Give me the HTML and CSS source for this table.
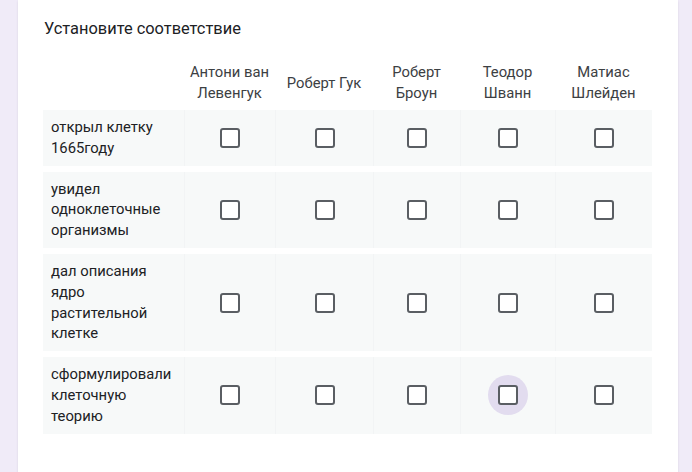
FILE: index.html
```html
<!DOCTYPE html>
<html lang="ru">
<head>
<meta charset="utf-8">
<link rel="stylesheet" href="styles.css">
</head>
<body>
<div class="card">
  <div class="title">Установите соответствие</div>
  <div class="table">
    <div class="row head">
      <div class="label"></div>
      <div class="cell">Антони ван Левенгук</div>
      <div class="cell">Роберт Гук</div>
      <div class="cell">Роберт Броун</div>
      <div class="cell">Теодор Шванн</div>
      <div class="cell">Матиас Шлейден</div>
    </div>
    <div class="row body">
      <div class="label">открыл клетку 1665году</div>
      <div class="cell"><span class="box"></span></div>
      <div class="cell"><span class="box"></span></div>
      <div class="cell"><span class="box"></span></div>
      <div class="cell"><span class="box"></span></div>
      <div class="cell"><span class="box"></span></div>
    </div>
    <div class="row body">
      <div class="label">увидел одноклеточные организмы</div>
      <div class="cell"><span class="box"></span></div>
      <div class="cell"><span class="box"></span></div>
      <div class="cell"><span class="box"></span></div>
      <div class="cell"><span class="box"></span></div>
      <div class="cell"><span class="box"></span></div>
    </div>
    <div class="row body">
      <div class="label">дал описания ядро растительной клетке</div>
      <div class="cell"><span class="box"></span></div>
      <div class="cell"><span class="box"></span></div>
      <div class="cell"><span class="box"></span></div>
      <div class="cell"><span class="box"></span></div>
      <div class="cell"><span class="box"></span></div>
    </div>
    <div class="row body">
      <div class="label">сформулировали клеточную теорию</div>
      <div class="cell"><span class="box"></span></div>
      <div class="cell"><span class="box"></span></div>
      <div class="cell"><span class="box"></span></div>
      <div class="cell"><span class="focus"><span class="box"></span></span></div>
      <div class="cell"><span class="box"></span></div>
    </div>
  </div>
</div>
</body>
</html>
```
FILE: styles.css
```css
html, body {
  margin: 0;
  padding: 0;
  background: #f0ebf8;
  font-family: Roboto, "Noto Sans", sans-serif;
  color: #202124;
}
.card {
  margin-left: 18px;
  width: 660px;
  height: 480px;
  box-sizing: border-box;
  background: #ffffff;
  box-shadow: 0 1px 2px rgba(60, 64, 67, 0.12);
  padding: 17px 25px 0 25px;
}
.title {
  font-size: 16.4px;
  line-height: 24px;
  padding-left: 1px;
}
.table {
  margin-top: 21px;
  display: flex;
  flex-direction: column;
  gap: 6px;
}
.row {
  display: grid;
  grid-template-columns: 141px 91px 98px 87px 95px 97px;
  width: 609px;
}
.row.head {
  align-items: center;
}
.row.head .cell {
  text-align: center;
  font-size: 14.8px;
  line-height: 21px;
  color: #3c4043;
  padding: 0 2px;
}
.row.body {
  background: #f7f9f9;
  align-items: stretch;
}
.row.body .label {
  font-size: 14.8px;
  line-height: 20.8px;
  padding: 7px 8px 7px 8px;
  color: #202124;
}
.row.body .cell {
  display: flex;
  align-items: center;
  justify-content: center;
  border-left: 1px solid #f2f4f5;
}
.box {
  display: block;
  width: 20px;
  height: 20px;
  box-sizing: border-box;
  border: 2px solid #5a5e63;
  border-radius: 3px;
  background: #ffffff;
}
.focus {
  display: flex;
  align-items: center;
  justify-content: center;
  width: 40px;
  height: 40px;
  border-radius: 50%;
  background: #e2dcef;
}
```
